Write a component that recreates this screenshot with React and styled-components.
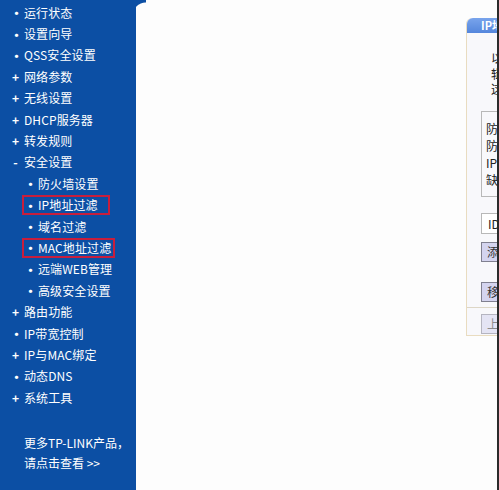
import React from 'react';
import styled, { createGlobalStyle } from 'styled-components';

const GlobalStyle = createGlobalStyle`
  html, body {
    margin: 0;
    padding: 0;
    background: #ffffff;
  }
  body {
    font-family: "Noto Sans CJK SC", "Noto Sans", sans-serif;
    font-size: 12px;
  }
`;

const Page = styled.div`
  display: flex;
  width: 499px;
  height: 490px;
  overflow: hidden;
  background: #fdfdfd;
`;

const Sidebar = styled.nav`
  position: relative;
  width: 136px;
  flex-shrink: 0;
  background: #0c4fa4;
  color: #ffffff;
  display: flex;
  flex-direction: column;
  padding-top: 2px;
  box-sizing: border-box;

  /* flared top edge of the menu frame */
  &::after {
    content: '';
    position: absolute;
    top: 0;
    left: 136px;
    width: 10px;
    height: 16px;
    background: radial-gradient(circle at 100% 100%, transparent 13px, #0c4fa4 14px);
  }
`;

const MenuList = styled.ul`
  list-style: none;
  margin: 0;
  padding: 0;
`;

const Item = styled.li`
  display: flex;
  align-items: center;
  height: 21.4px;
  padding-left: ${p => (p.$sub ? 22 : 8)}px;
  font-size: 12px;
  line-height: 1;
  white-space: nowrap;
`;

const Entry = styled.span`
  display: inline-flex;
  align-items: center;
  height: 16px;
  width: ${p => (p.$width ? `${p.$width - 4}px` : 'auto')};
  border: 2px solid ${p => (p.$framed ? '#c81e3c' : 'transparent')};
`;

const Marker = styled.span`
  display: inline-block;
  width: 11px;
  font-size: ${p => (p.$kind === 'dot' ? 13 : 12)}px;
  font-weight: bold;
  text-align: center;
  margin-right: 3px;
`;

const Label = styled.span`
  letter-spacing: 0.1px;
`;

const Promo = styled.div`
  margin-top: 25px;
  padding-left: 24px;
  font-size: 12px;
  line-height: 20px;
`;

const Main = styled.main`
  flex: 1;
  display: flex;
  padding-top: 18px;
  padding-left: 330px;
  box-sizing: border-box;
  border-right: 2px solid #2b2b2b;
  overflow: hidden;
`;

const Panel = styled.section`
  width: 260px;
  height: 318px;
  flex-shrink: 0;
  background: #f8f8fb;
  border: 1px solid #e9dcc0;
  border-top: none;
  border-radius: 6px 0 0 0;
  box-sizing: border-box;
  display: flex;
  flex-direction: column;
  color: #222;
`;

const PanelHead = styled.div`
  height: 15px;
  background: linear-gradient(#79a4ec, #5486dc);
  border-radius: 6px 0 0 0;
  color: #ffffff;
  font-size: 11px;
  font-weight: bold;
  line-height: 15px;
  padding-left: 14px;
  white-space: nowrap;
`;

const Intro = styled.div`
  padding: 17px 0 0 24px;
  font-size: 12px;
  line-height: 15.5px;
  white-space: nowrap;
`;

const Status = styled.div`
  margin: 14px 0 0 14px;
  height: 86px;
  border: 1px solid #b8b8b8;
  padding: 8px 0 0 4px;
  box-sizing: border-box;
  font-size: 12px;
  line-height: 17.3px;
  white-space: nowrap;
`;

const Field = styled.div`
  margin: 16px 0 0 14px;
  height: 19px;
  border: 1px solid #b8b8b8;
  background: #ffffff;
  padding-left: 6px;
  font-size: 12px;
  line-height: 19px;
  white-space: nowrap;
`;

const Button = styled.button`
  align-self: flex-start;
  margin: ${p => p.$gap}px 0 0 14px;
  height: 20px;
  padding: 0 5px;
  border: 1px solid #808090;
  background: #d4d4ef;
  font-family: inherit;
  font-size: 12px;
  color: #333;
  white-space: nowrap;
  opacity: ${p => (p.$muted ? 0.55 : 1)};
`;

const Divider = styled.hr`
  margin: 5px 0 0;
  border: none;
  border-top: 1px solid #ddd6c6;
  width: 100%;
`;

const menu = [
  { text: '运行状态', kind: 'dot' },
  { text: '设置向导', kind: 'dot' },
  { text: 'QSS安全设置', kind: 'dot' },
  { text: '网络参数', kind: 'plus' },
  { text: '无线设置', kind: 'plus' },
  { text: 'DHCP服务器', kind: 'plus' },
  { text: '转发规则', kind: 'plus' },
  { text: '安全设置', kind: 'minus' },
  { text: '防火墙设置', kind: 'dot', sub: true },
  { text: 'IP地址过滤', kind: 'dot', sub: true, frame: 88 },
  { text: '域名过滤', kind: 'dot', sub: true },
  { text: 'MAC地址过滤', kind: 'dot', sub: true, frame: 93 },
  { text: '远端WEB管理', kind: 'dot', sub: true },
  { text: '高级安全设置', kind: 'dot', sub: true },
  { text: '路由功能', kind: 'plus' },
  { text: 'IP带宽控制', kind: 'dot' },
  { text: 'IP与MAC绑定', kind: 'plus' },
  { text: '动态DNS', kind: 'dot' },
  { text: '系统工具', kind: 'plus' },
];

const glyph = { dot: '•', plus: '+', minus: '-' };

export default function App() {
  return (
    <>
      <GlobalStyle />
      <Page>
        <Sidebar>
          <MenuList>
            {menu.map(m => (
              <Item key={m.text} $sub={m.sub}>
                <Entry $framed={!!m.frame} $width={m.frame}>
                  <Marker $kind={m.kind}>{glyph[m.kind]}</Marker>
                  <Label>{m.text}</Label>
                </Entry>
              </Item>
            ))}
          </MenuList>
          <Promo>
            更多TP-LINK产品，
            <br />
            请点击查看 &gt;&gt;
          </Promo>
        </Sidebar>
        <Main>
          <Panel>
            <PanelHead>IP地址过滤</PanelHead>
            <Intro>
              以下列表为已设置的IP地址过滤条目，可以编
              <br />
              辑或删除这些条目。
              <br />
              这些规则只对局域网内的主机有效。
            </Intro>
            <Status>
              防火墙功能：关闭
              <br />
              防火墙IP地址过滤功能：关闭
              <br />
              IP地址过滤规则：允许通过
              <br />
              缺省过滤规则：凡是不符合已设规则的数据包
            </Status>
            <Field>ID 生效时间 局域网IP地址 端口</Field>
            <Button $gap={8}>添加新条目</Button>
            <Button $gap={20}>移除所有条目</Button>
            <Divider />
            <Button $gap={6} $muted>上一页</Button>
          </Panel>
        </Main>
      </Page>
    </>
  );
}
